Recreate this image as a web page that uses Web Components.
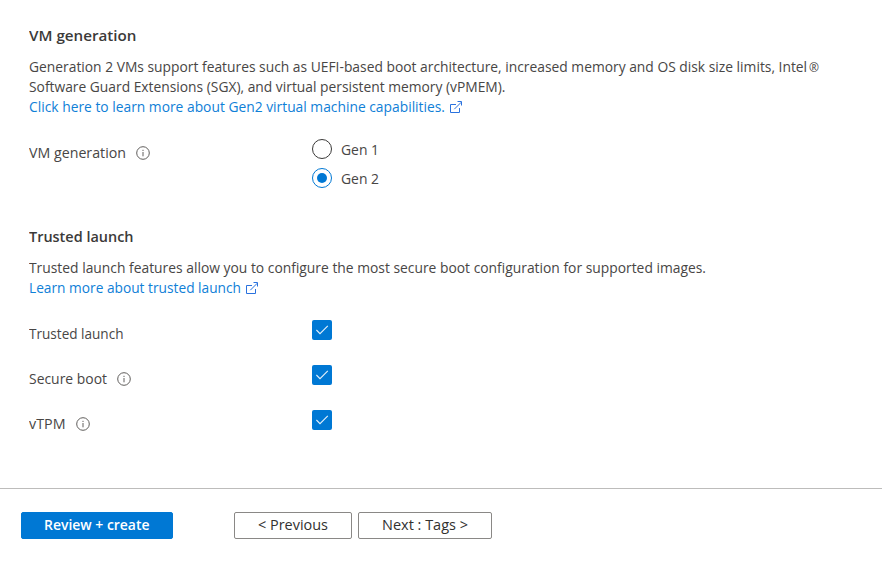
<!DOCTYPE html>
<html lang="en">
<head>
<meta charset="utf-8">
<title>VM settings</title>
<style>
body{margin:0;background:#fff;color:#484645;font:400 14.4px/20px "Open Sans","Noto Sans",sans-serif}
</style>
</head>
<body>
<vm-page></vm-page>
<script>
const define=(name,html,setup)=>customElements.define(name,class extends HTMLElement{
  connectedCallback(){
    if(this.shadowRoot)return;
    const t=document.createElement('template');
    t.innerHTML=html;
    this.attachShadow({mode:'open'}).append(t.content.cloneNode(true));
    if(setup)setup(this,this.shadowRoot);
  }
});

/* A single line of text whose glyphs are condensed so that it spans the given width. */
define('fit-text',`<style>:host{display:inline-block;white-space:pre;flex:none}span{display:inline-block;transform-origin:0 0}</style><span><slot></slot></span>`,(el,root)=>{
  const span=root.querySelector('span'),w=+el.getAttribute('w');
  const natural=span.getBoundingClientRect().width;
  span.style.transform='scaleX('+w/natural+')';
  el.style.width=w+'px';
});

define('info-icon',`<style>:host{display:block;width:14px;height:14px;flex:none}svg{display:block}</style>
<svg width="14" height="14" viewBox="0 0 14 14" fill="none" stroke="#605e5c" stroke-width="1"><circle cx="7" cy="7" r="6.3"/><path d="M7 6v4.3M7 3.8v1.2"/></svg>`);

define('external-icon',`<style>:host{display:block;width:13px;height:13px;flex:none}svg{display:block}</style>
<svg width="13" height="13" viewBox="0 0 13 13" fill="none" stroke="#2a72de" stroke-width="1"><path d="M6 3.5H.5v8h9V7M4.3 8.2 11.3 1.2M7.5 .5h4v4"/></svg>`);

define('section-title',`<style>:host{display:block;height:20px;font-weight:600;font-size:15px;color:#3b3a39}</style><slot></slot>`);

define('text-link',`<style>:host{display:flex;height:20px;color:#0f80d7;align-items:center;gap:5px}</style><slot></slot><external-icon></external-icon>`);

define('form-row',`<style>
:host{display:grid;grid-template-columns:283px 1fr;align-items:start}
.label{display:flex;align-items:center;gap:10px;padding-top:4px;height:20px}
</style><div class="label"><slot name="label"></slot></div><div><slot></slot></div>`);

define('radio-option',`<style>
:host{display:flex;gap:9px;height:20px;align-items:flex-start}
:host(:not(:last-of-type)){margin-bottom:9px}
i{box-sizing:border-box;width:20px;height:20px;border:1px solid #3b3a39;border-radius:50%;display:grid;place-items:center;flex:none}
:host([checked]) i{border-color:#0078d4}
:host([checked]) i::after{content:"";width:10px;height:10px;border-radius:50%;background:#0078d4}
.t{padding-top:1px}
</style><i></i><div class="t"><slot></slot></div>`);

define('check-box',`<style>:host{display:block;width:20px;height:20px;border-radius:2px;background:#0078d4}svg{display:block}</style>
<svg width="20" height="20" viewBox="0 0 20 20" fill="none" stroke="#e5f1fb" stroke-width="1.1"><path d="M4.4 10 8 13.6 15.8 5.9"/></svg>`);

define('action-button',`<style>
:host{box-sizing:border-box;display:flex;justify-content:center;height:27px;padding-top:2px;border:1px solid #8a8886;border-radius:2px;color:#323130;font-weight:500;line-height:20px;font-size:14.4px}
:host([primary]){background:#0078d4;border-color:#0078d4;color:#fff;font-weight:600}
</style><slot></slot>`);

define('vm-page',`<style>
:host{display:flex;flex-direction:column;height:562px;box-sizing:border-box}
main{height:488px;box-sizing:border-box;padding:25px 0 0 29px}
.desc{margin-top:12px;display:flex;flex-direction:column;align-items:flex-start}
.desc fit-text{height:20px}
.reg{font-size:12.5px;line-height:1;margin-left:2px}
.gen{margin-top:22px}
.trusted{margin-top:38px}
.checks{margin-top:22px;display:grid;gap:21px}
footer{border-top:1px solid #bdbcbb;padding:23px 21px;display:flex}
</style>
<main>
<section-title><fit-text w="107.5">VM generation</fit-text></section-title>
<div class="desc">
<fit-text w="790">Generation 2 VMs support features such as UEFI-based boot architecture, increased memory and OS disk size limits, Intel<span class="reg">®</span></fit-text>
<fit-text w="476.5">Software Guard Extensions (SGX), and virtual persistent memory (vPMEM).</fit-text>
<text-link><fit-text w="416">Click here to learn more about Gen2 virtual machine capabilities.</fit-text></text-link>
</div>
<form-row class="gen"><fit-text slot="label" w="97">VM generation</fit-text><info-icon slot="label"></info-icon>
<radio-option><fit-text w="38">Gen 1</fit-text></radio-option><radio-option checked><fit-text w="38">Gen 2</fit-text></radio-option></form-row>
<section-title class="trusted"><fit-text w="104.5">Trusted launch</fit-text></section-title>
<div class="desc">
<fit-text w="677">Trusted launch features allow you to configure the most secure boot configuration for supported images.</fit-text>
<text-link><fit-text w="212">Learn more about trusted launch</fit-text></text-link>
</div>
<div class="checks">
<form-row><fit-text slot="label" w="94.5">Trusted launch</fit-text><check-box></check-box></form-row>
<form-row><fit-text slot="label" w="78">Secure boot</fit-text><info-icon slot="label"></info-icon><check-box></check-box></form-row>
<form-row><fit-text slot="label" w="36.5">vTPM</fit-text><info-icon slot="label"></info-icon><check-box></check-box></form-row>
</div>
</main>
<footer>
<action-button primary style="width:152px"><fit-text w="105.5">Review + create</fit-text></action-button>
<action-button style="width:118px;margin-left:61px"><fit-text w="70">&lt; Previous</fit-text></action-button>
<action-button style="width:134px;margin-left:6px"><fit-text w="86">Next : Tags &gt;</fit-text></action-button>
</footer>`);
</script>
</body>
</html>
